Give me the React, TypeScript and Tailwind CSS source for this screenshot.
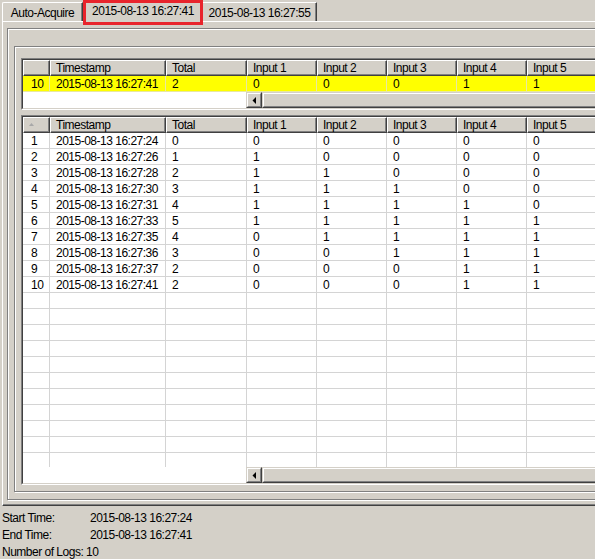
import React from 'react';

const cols = [
  { w: 'w-[27px]', pl: 'pl-[8px]', hpl: 'pl-[5px]' },
  { w: 'w-[116px]', pl: 'pl-[6px]', hpl: 'pl-[5px]' },
  { w: 'w-[81px]', pl: 'pl-[6px]', hpl: 'pl-[5px]' },
  { w: 'w-[70px]', pl: 'pl-[6px]', hpl: 'pl-[5px]' },
  { w: 'w-[70px]', pl: 'pl-[6px]', hpl: 'pl-[5px]' },
  { w: 'w-[70px]', pl: 'pl-[6px]', hpl: 'pl-[5px]' },
  { w: 'w-[70px]', pl: 'pl-[6px]', hpl: 'pl-[5px]' },
  { w: 'w-[70px]', pl: 'pl-[6px]', hpl: 'pl-[5px]' },
];

const headers = ['', 'Timestamp', 'Total', 'Input 1', 'Input 2', 'Input 3', 'Input 4', 'Input 5'];

const logs = [
  ['1', '2015-08-13 16:27:24', '0', '0', '0', '0', '0', '0'],
  ['2', '2015-08-13 16:27:26', '1', '1', '0', '0', '0', '0'],
  ['3', '2015-08-13 16:27:28', '2', '1', '1', '0', '0', '0'],
  ['4', '2015-08-13 16:27:30', '3', '1', '1', '1', '0', '0'],
  ['5', '2015-08-13 16:27:31', '4', '1', '1', '1', '1', '0'],
  ['6', '2015-08-13 16:27:33', '5', '1', '1', '1', '1', '1'],
  ['7', '2015-08-13 16:27:35', '4', '0', '1', '1', '1', '1'],
  ['8', '2015-08-13 16:27:36', '3', '0', '0', '1', '1', '1'],
  ['9', '2015-08-13 16:27:37', '2', '0', '0', '0', '1', '1'],
  ['10', '2015-08-13 16:27:41', '2', '0', '0', '0', '1', '1'],
];

const selected = logs[9];

function Raised({ className = '', children }: { className?: string; children?: React.ReactNode }) {
  return (
    <div className={`border-t border-l border-t-[#d4d0c8] border-l-[#d4d0c8] border-b border-r border-b-[#404040] border-r-[#404040] ${className}`}>
      <div className="h-full border-t border-l border-t-white border-l-white border-b border-r border-b-[#808080] border-r-[#808080] bg-[#d4d0c8] flex items-center justify-center">
        {children}
      </div>
    </div>
  );
}

function HScroll() {
  return (
    <div className="flex flex-1 h-[16px]">
      <Raised className="w-[16px] h-[16px] shrink-0">
        <svg width="4" height="7" viewBox="0 0 4 7">
          <polygon points="4,0 4,7 0.5,3.5" fill="#000" />
        </svg>
      </Raised>
      <Raised className="flex-1 h-[16px]" />
    </div>
  );
}

function HeaderRow({ arrow }: { arrow?: boolean }) {
  return (
    <div className="flex h-[16px] bg-[#d4d0c8]">
      {headers.map((h, i) => (
        <div
          key={i}
          className={`${cols[i].w} ${cols[i].hpl} shrink-0 h-full flex items-center border-t border-l border-t-white border-l-white border-b border-r border-b-[#404040] border-r-[#404040] shadow-[inset_-1px_-1px_0_#808080]`}
        >
          {i === 0 && arrow ? (
            <svg width="5" height="3" viewBox="0 0 5 3" className="-mt-[2px]">
              <polygon points="2.5,0 5,3 0,3" fill="#a8a8a8" />
            </svg>
          ) : (
            h
          )}
        </div>
      ))}
      <div className="flex-1 h-full border-t border-l border-t-white border-l-white border-b border-b-[#404040]" />
    </div>
  );
}

function Row({ cells, yellow }: { cells: string[]; yellow?: boolean }) {
  const line = yellow ? 'border-[#e8e8a0]' : 'border-[#d4d4d4]';
  return (
    <div className={`flex h-[16px] ${yellow ? 'bg-[#ffff00]' : 'bg-white'}`}>
      {cols.map((c, i) => (
        <div key={i} className={`${c.w} ${c.pl} shrink-0 h-full flex items-center border-r border-b ${line}`}>
          {cells[i]}
        </div>
      ))}
      <div className={`flex-1 h-full border-b ${line}`} />
    </div>
  );
}

function Sunken({ children }: { children: React.ReactNode }) {
  return (
    <div className="border-t border-l border-t-[#808080] border-l-[#808080] border-b border-r border-b-white border-r-white">
      <div className="border-t border-l border-t-[#404040] border-l-[#404040] border-b border-r border-b-[#d4d0c8] border-r-[#d4d0c8] bg-white overflow-hidden">
        {children}
      </div>
    </div>
  );
}

function Etched({ className = '', children }: { className?: string; children: React.ReactNode }) {
  return (
    <div className={`border border-[#808080] shadow-[inset_1px_1px_0_#fff,1px_1px_0_#fff] ${className}`}>{children}</div>
  );
}

export default function App() {
  const empty = Array.from({ length: 10 }, () => [] as string[]);
  return (
    <div className="relative w-[595px] h-[559px] overflow-hidden bg-[#d4d0c8] text-black text-[12px] tracking-[-0.5px] leading-none font-['Liberation_Sans',Arial,sans-serif]">
      {/* tab strip */}
      <div className="flex items-end h-[21px] pl-[2px]">
        <div className="w-[81px] h-[19px] flex items-center justify-center pt-[1px] border-t border-l border-t-white border-l-white border-r border-r-[#404040] shadow-[inset_-1px_0_0_#808080] rounded-tl-[2px]">
          Auto-Acquire
        </div>
        <div className="relative z-10 w-[120px] h-[22px] -mb-px flex items-center justify-center pb-[2px] bg-[#d4d0c8] border-t border-l border-t-white border-l-white border-r border-r-[#404040] shadow-[inset_-1px_0_0_#808080] rounded-tl-[2px]">
          2015-08-13 16:27:41
        </div>
        <div className="w-[114px] h-[19px] flex items-center justify-center pt-[1px] border-t border-t-white border-r border-r-[#404040] shadow-[inset_-1px_0_0_#808080]">
          2015-08-13 16:27:55
        </div>
      </div>

      {/* tab page */}
      <div className="ml-[2px] w-[740px] border-t border-l border-t-white border-l-white border-b border-r border-b-[#404040] border-r-[#404040]">
        <div className="border-b border-r border-b-[#808080] border-r-[#808080] pt-[6px] pl-[4px] pb-[4px] pr-[4px]">
          <Etched className="pt-[17px] pl-[6px] pb-[7px] pr-[6px]">
            <Etched className="pt-[11px] pl-[6px] pb-[6px] pr-[6px] flex flex-col gap-[5px]">
              <Sunken>
                <HeaderRow />
                <Row cells={selected} yellow />
                <div className="flex h-[16px]">
                  <div className="w-[223px] shrink-0 bg-white" />
                  <HScroll />
                </div>
              </Sunken>
              <Sunken>
                <HeaderRow arrow />
                {logs.map((r) => (
                  <Row key={r[0]} cells={r} />
                ))}
                {empty.map((r, i) => (
                  <Row key={'e' + i} cells={r} />
                ))}
                <div className="flex h-[14px] bg-white">
                  {cols.map((c, i) => (
                    <div key={i} className={`${c.w} shrink-0 h-full border-r border-[#d4d4d4]`} />
                  ))}
                </div>
                <div className="flex h-[16px]">
                  <div className="w-[223px] shrink-0 bg-white" />
                  <HScroll />
                </div>
              </Sunken>
            </Etched>
          </Etched>
        </div>
      </div>

      {/* summary */}
      <div className="mt-[3px] pl-[2px]">
        <div className="flex items-center h-[17px]">
          <span className="w-[88px]">Start Time:</span>
          <span>2015-08-13 16:27:24</span>
        </div>
        <div className="flex items-center h-[17px]">
          <span className="w-[88px]">End Time:</span>
          <span>2015-08-13 16:27:41</span>
        </div>
        <div className="flex items-center h-[17px]">
          <span>Number of Logs: 10</span>
        </div>
      </div>

      {/* highlight annotation */}
      <div className="absolute left-[83px] top-0 w-[120px] h-[25px] border-[3px] border-[#e8242c] z-20" />
    </div>
  );
}
